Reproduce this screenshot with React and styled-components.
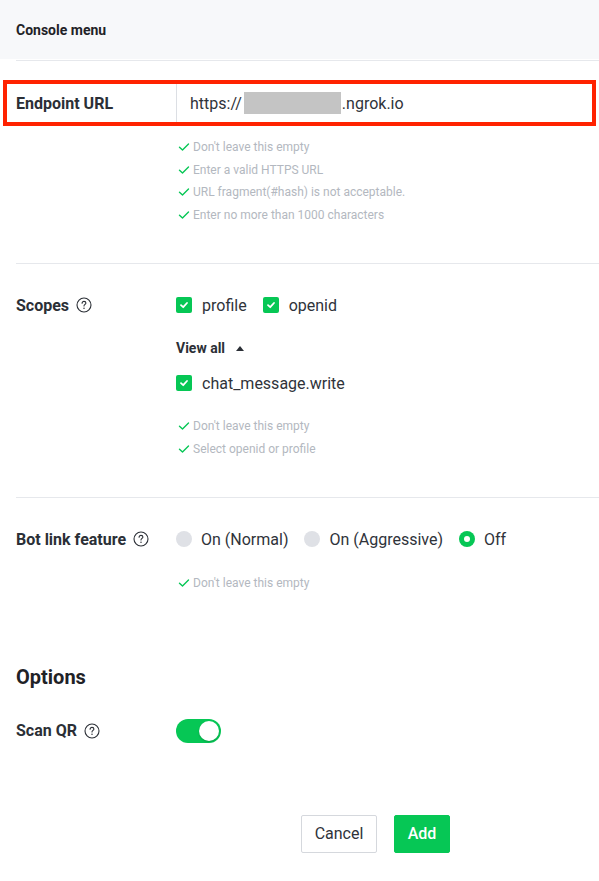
import React from "react";
import styled, { createGlobalStyle } from "styled-components";

const GREEN = "#06c755";

const Global = createGlobalStyle`
  html, body { margin: 0; padding: 0; background: #fff; }
  body { font-family: Roboto, "Liberation Sans", Arial, sans-serif; color: #2b2f36; }
  * { box-sizing: border-box; }
`;

const Page = styled.div`
  width: 599px;
  padding-bottom: 28px;
`;

const Header = styled.div`
  height: 59px;
  background: #f7f8fa;
  display: flex;
  align-items: center;
  padding-left: 16px;
  font-size: 14px;
  font-weight: 700;
  color: #1f2227;
`;

const Rule = styled.div`
  margin-left: 16px;
  margin-top: ${(p) => p.$top || 0}px;
  height: 1px;
  background: #e6e8ec;
`;

const Highlight = styled.div`
  margin: 19px 3px 0;
  border: 4px solid #ff2200;
  padding: 0 0 0 9px;
  display: flex;
  align-items: stretch;
`;

const Label = styled.div`
  width: ${(p) => p.$w || 160}px;
  flex: none;
  display: flex;
  align-items: center;
  gap: 7px;
  font-size: 16px;
  font-weight: 700;
  color: #2b2f36;
  height: ${(p) => p.$h || 18}px;
`;

const Input = styled.div`
  flex: 1;
  height: 38px;
  border-left: 1px solid #dcdfe4;
  padding: 0 13px;
  display: flex;
  align-items: center;
  font-size: 16px;
  color: #2f333a;
`;

const Redacted = styled.span`
  display: inline-block;
  width: 97px;
  height: 22px;
  background: #c4c4c4;
  margin: 0 1px 0 2px;
`;

const Hints = styled.ul`
  list-style: none;
  margin: ${(p) => p.$top || 0}px 0 0 ${(p) => p.$left || 178}px;
  padding: 0;
`;

const Hint = styled.li`
  display: flex;
  align-items: center;
  gap: 3px;
  height: 22.5px;
  font-size: 12px;
  color: #b3b8c0;
`;

const Row = styled.div`
  display: flex;
  align-items: flex-start;
  padding-left: 16px;
  margin-top: ${(p) => p.$top || 0}px;
`;

const Field = styled.div`
  display: flex;
  flex-direction: column;
`;

const Options = styled.div`
  display: flex;
  align-items: center;
  height: 18px;
  gap: ${(p) => p.$gap || 16}px;
  margin-top: ${(p) => p.$top || 0}px;
`;

const Choice = styled.label`
  display: flex;
  align-items: center;
  gap: ${(p) => p.$gap || 10}px;
  font-size: 16px;
  color: #2f333a;
`;

const Box = styled.span`
  width: 16px;
  height: 16px;
  border-radius: 2px;
  background: ${GREEN};
  display: flex;
  align-items: center;
  justify-content: center;
`;

const Radio = styled.span`
  width: 16px;
  height: 16px;
  border-radius: 50%;
  background: ${(p) => (p.$on ? GREEN : "#dfe1e6")};
  display: flex;
  align-items: center;
  justify-content: center;
  &::after {
    content: "";
    display: ${(p) => (p.$on ? "block" : "none")};
    width: 6px;
    height: 6px;
    border-radius: 50%;
    background: #fff;
  }
`;

const ViewAll = styled.div`
  margin-top: 24px;
  height: 20px;
  display: flex;
  align-items: center;
  gap: 11px;
  font-size: 14px;
  font-weight: 700;
  color: #2b2f36;
`;

const Caret = styled.span`
  width: 0;
  height: 0;
  border-left: 4.5px solid transparent;
  border-right: 4.5px solid transparent;
  border-bottom: 5px solid #2b2f36;
`;

const Heading = styled.h2`
  margin: 70px 0 0 16px;
  font-size: 20px;
  line-height: 24px;
  font-weight: 700;
  color: #1f2227;
`;

const Toggle = styled.span`
  width: 45px;
  height: 24px;
  border-radius: 12px;
  background: ${GREEN};
  display: flex;
  align-items: center;
  justify-content: flex-end;
  padding: 0 2px;
  &::after {
    content: "";
    width: 20px;
    height: 20px;
    border-radius: 50%;
    background: #fff;
    box-shadow: 0 1px 2px rgba(0, 0, 0, 0.2);
  }
`;

const Footer = styled.div`
  margin-top: 72px;
  display: flex;
  justify-content: center;
  gap: 17px;
  padding: 0 24px 0 176px;
`;

const Button = styled.button`
  height: 38px;
  padding: 0 12px;
  min-width: ${(p) => (p.$primary ? 56 : 76)}px;
  border-radius: 2px;
  font-family: inherit;
  font-size: 16px;
  font-weight: ${(p) => (p.$primary ? 500 : 400)};
  border: 1px solid ${(p) => (p.$primary ? GREEN : "#d5d8dd")};
  background: ${(p) => (p.$primary ? GREEN : "#fff")};
  color: ${(p) => (p.$primary ? "#fff" : "#2f333a")};
`;

const Tick = () => (
  <svg width="12" height="12" viewBox="0 0 12 12" fill="none">
    <path d="M1.5 6.2 L4.5 9 L10.5 3" stroke={GREEN} strokeWidth="1.4" strokeLinecap="round" strokeLinejoin="round" />
  </svg>
);

const BoxTick = () => (
  <svg width="10" height="10" viewBox="0 0 10 10" fill="none">
    <path d="M2 5.2 L4.2 7.2 L8 3" stroke="#fff" strokeWidth="1.8" strokeLinecap="round" strokeLinejoin="round" />
  </svg>
);

const Help = () => (
  <svg width="16" height="16" viewBox="0 0 16 16" fill="none">
    <circle cx="8" cy="8" r="7" stroke="#2b2f36" strokeWidth="1.1" />
    <path d="M6.1 6.2 C6.1 5.1 7 4.4 8 4.4 C9.1 4.4 9.9 5.1 9.9 6.1 C9.9 7.4 8 7.5 8 9" stroke="#2b2f36" strokeWidth="1.1" strokeLinecap="round" />
    <circle cx="8" cy="11.3" r="0.75" fill="#2b2f36" />
  </svg>
);

const HintList = ({ items, top }) => (
  <Hints $top={top}>
    {items.map((t) => (
      <Hint key={t}>
        <Tick />
        {t}
      </Hint>
    ))}
  </Hints>
);

export default function App() {
  return (
    <Page>
      <Global />
      <Header>Console menu</Header>
      <Rule $top={1} />

      <Highlight>
        <Label $h={38}>Endpoint URL</Label>
        <Input>
          https://<Redacted />.ngrok.io
        </Input>
      </Highlight>
      <HintList
        top={10}
        items={[
          "Don't leave this empty",
          "Enter a valid HTTPS URL",
          "URL fragment(#hash) is not acceptable.",
          "Enter no more than 1000 characters",
        ]}
      />

      <Rule $top={37} />

      <Row $top={32}>
        <Label>
          Scopes <Help />
        </Label>
        <Field>
          <Options>
            <Choice>
              <Box><BoxTick /></Box>profile
            </Choice>
            <Choice>
              <Box><BoxTick /></Box>openid
            </Choice>
          </Options>
          <ViewAll>
            View all <Caret />
          </ViewAll>
          <Options $top={16}>
            <Choice>
              <Box><BoxTick /></Box>chat_message.write
            </Choice>
          </Options>
        </Field>
      </Row>
      <HintList top={23} items={["Don't leave this empty", "Select openid or profile"]} />

      <Rule $top={37} />

      <Row $top={32}>
        <Label>
          Bot link feature <Help />
        </Label>
        <Options $gap={16}>
          <Choice $gap={9}>
            <Radio />On (Normal)
          </Choice>
          <Choice $gap={9}>
            <Radio />On (Aggressive)
          </Choice>
          <Choice $gap={9}>
            <Radio $on />Off
          </Choice>
        </Options>
      </Row>
      <HintList top={24} items={["Don't leave this empty"]} />

      <Heading>Options</Heading>

      <Row $top={30}>
        <Label $h={24}>
          Scan QR <Help />
        </Label>
        <Toggle />
      </Row>

      <Footer>
        <Button>Cancel</Button>
        <Button $primary>Add</Button>
      </Footer>
    </Page>
  );
}
